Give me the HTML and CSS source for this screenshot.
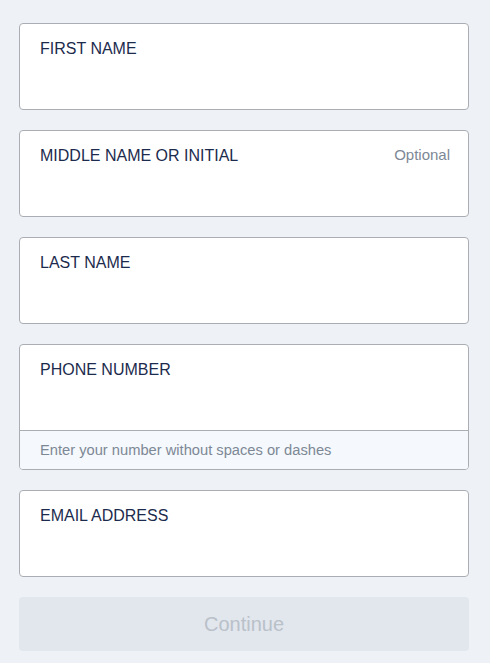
FILE: index.html
```html
<!DOCTYPE html>
<html>
<head>
<meta charset="utf-8">
<link rel="stylesheet" href="styles.css">
</head>
<body>
<form class="form">
  <div class="field">
    <div class="field-main"><label class="label">FIRST NAME</label></div>
  </div>
  <div class="field">
    <div class="field-main"><label class="label">MIDDLE NAME OR INITIAL</label><span class="optional">Optional</span></div>
  </div>
  <div class="field">
    <div class="field-main"><label class="label">LAST NAME</label></div>
  </div>
  <div class="field">
    <div class="field-main"><label class="label">PHONE NUMBER</label></div>
    <div class="hint">Enter your number without spaces or dashes</div>
  </div>
  <div class="field">
    <div class="field-main"><label class="label">EMAIL ADDRESS</label></div>
  </div>
  <button type="button" class="btn" disabled>Continue</button>
</form>
</body>
</html>
```
FILE: styles.css
```css
html, body {
  margin: 0;
  padding: 0;
  background: #eef2f7;
}
body {
  font-family: "Liberation Sans", Arial, sans-serif;
}
.form {
  display: flex;
  flex-direction: column;
  gap: 20px;
  width: 450px;
  padding: 23px 0 0 19px;
}
.field {
  background: #fff;
  border: 1px solid #aaaeb4;
  border-radius: 4px;
  overflow: hidden;
}
.field-main {
  height: 85px;
  box-sizing: border-box;
  padding: 15px 18px 0 20px;
  display: flex;
  justify-content: space-between;
  align-items: flex-start;
}
.label {
  font-size: 16px;
  line-height: 20px;
  color: #1c2b4d;
}
.optional {
  font-size: 15px;
  line-height: 18px;
  color: #7d8896;
}
.hint {
  height: 38px;
  border-top: 1px solid #aaaeb4;
  background: #f5f8fc;
  padding: 0 20px;
  font-size: 14.7px;
  line-height: 38px;
  color: #7d8896;
}
.btn {
  height: 54px;
  border: none;
  border-radius: 4px;
  background: #e2e6ed;
  color: #b9c1c9;
  font-family: "Liberation Sans", Arial, sans-serif;
  font-size: 20px;
  padding: 0;
}
```
